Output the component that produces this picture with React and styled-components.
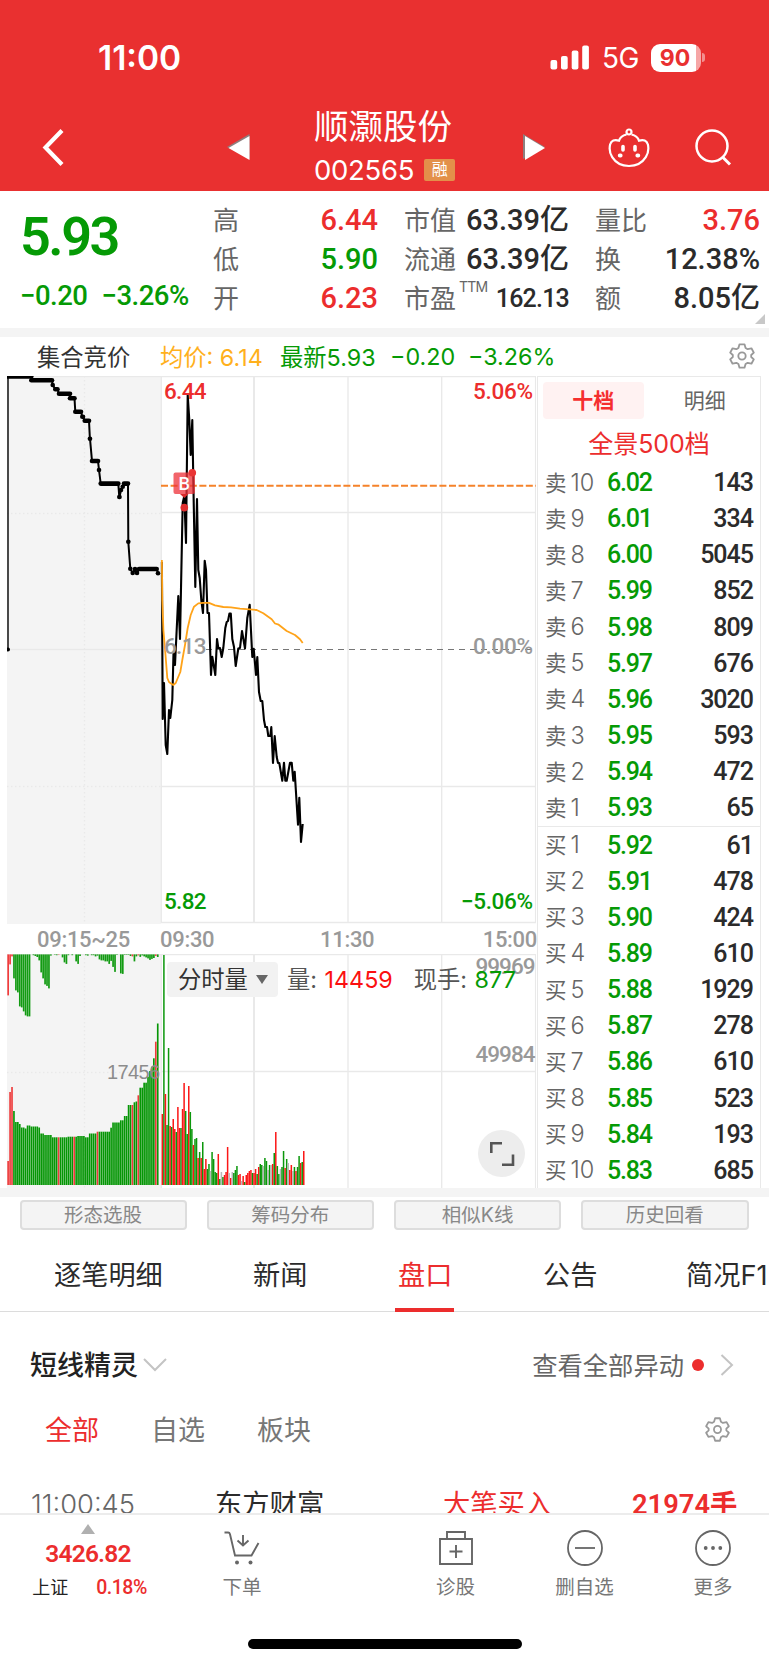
import React from 'react';
import styled, { createGlobalStyle } from 'styled-components'

const red = '#ec2d2d'
const green = '#059a05'
const cjk = '"Noto Sans CJK SC", sans-serif'

const sells = [
  ['10', '6.02', 143], ['9', '6.01', 334], ['8', '6.00', 5045], ['7', '5.99', 852], ['6', '5.98', 809],
  ['5', '5.97', 676], ['4', '5.96', 3020], ['3', '5.95', 593], ['2', '5.94', 472], ['1', '5.93', 65],
]
const buys = [
  ['1', '5.92', 61], ['2', '5.91', 478], ['3', '5.90', 424], ['4', '5.89', 610], ['5', '5.88', 1929],
  ['6', '5.87', 278], ['7', '5.86', 610], ['8', '5.85', 523], ['9', '5.84', 193], ['10', '5.83', 685],
]

const stats = [
  [['高', '6.44', red], ['低', '5.90', green], ['开', '6.23', red]],
  [['市值', '63.39亿'], ['流通', '63.39亿'], ['市盈', '162.13', null, 'TTM']],
  [['量比', '3.76', red], ['换', '12.38%'], ['额', '8.05亿']],
]

// call auction matches, drawn as a dotted step line
const auctionSteps = [
  [8, 376.5, 31.3], [31.3, 380.3, 52], [52.7, 385, 52.7], [55.3, 389.3, 57.5], [59, 393.8, 70], [70, 398.3, 74.5],
  [75.3, 411.7, 81], [82.3, 416.7, 83], [84.7, 420.7, 89], [89.9, 438.7, 90], [92, 461, 98], [99, 470, 99],
  [100.7, 483.6, 118.3], [119.3, 497, 119.5], [121, 490, 121], [122.7, 486.7, 122.7], [124, 483.6, 128], [128.3, 541.7, 128.3],
  [130.3, 568.7, 130.3], [132.7, 573, 132.7], [135, 569, 135], [137, 573, 137], [139, 569, 156.7], [158, 573.3, 158],
]

const price = '161.9,562 162.7,719 164,683 165.7,745 167.3,754 169,710 170.3,718 172.3,700 173.5,653 175,665 178.3,596 180,639 182.7,503 184.3,496 186,543 187.7,395 189.3,420 190.7,455 192.3,420 193.3,480 195.3,587 197,499 198.3,570 199.7,578 201.3,600 203,613 204.7,560.7 206,570 207.5,613 209,613 211,675 212.3,656.7 215.3,675 217,639 218.3,648 220,648 221.7,657 223.3,648 225.3,628 226.7,622 228,621 229.4,613.6 230.8,613.6 232.3,639 234,647 235.7,666 238.3,648.5 240,648 242,631 245,648.5 247.3,618 249.7,604.7 252.3,657 253.7,648.7 256,675 257.3,657 259,692 260.7,701 262.3,701 264,720 265.3,727 267,727 268.3,736 270.3,736 271.3,727 273,763 274.7,736 276.7,757 278,763 279.3,763 282.3,780.7 284,762.7 285.3,780.7 286.7,780.7 290,762.7 291.7,762.7 293.3,780.7 294.7,771.7 298,824.7 299.3,797.7 301,842 302.7,824'

const average = '161.9,560 162.3,600 163.4,630 165.5,655 167.3,678 169,682 171,683.5 173.3,685 175.7,683 180.3,672 182.3,660 185,645 187.7,628 190.7,615 194,606.7 198.3,603.4 203,602.8 209,602.8 215,605.3 223.3,607 231,607.3 240,608.7 256.7,610 263.3,613.3 271.7,619.3 275,623.5 278.7,624.7 286.7,631 295,635 300,639.3 302.7,643'

const auctionVolume = [
  [7.6, 24], [9.5, 93], [11.5, 98], [13.4, 74], [15.4, 63], [18.3, 61], [20.7, 57.5], [25, 56.5], [27.3, 59.5],
  [31, 58.5], [39, 57.5], [40.7, 51.5], [45, 50], [52, 47.7], [66.7, 48.3], [77.3, 49], [85, 47.7], [88.7, 51.5],
  [97, 53.3], [110, 57.3], [112, 62.5], [120, 64.7], [124, 69], [128, 80], [132.7, 82.7], [135, 83.5], [137, 89.7],
  [140, 97.3], [144, 102.3], [146.7, 108.3], [148.5, 114], [150.7, 118.3], [152.7, 126.7], [154.6, 143.3], [157, 161.5],
]
const auctionReds = [0, 1, 2, 26, 34, 46, 64, 67, 76]

const unmatched = [
  41, 10, 2, 24, 36, 38, 52, 53, 57, 61, 62, 62, 0, 0.8, 1.6, 2.6, 6, 18, 24, 30, 31.5, 34, 1.2, 0, 0.4, 0.8, 0.4, 0,
  3, 8, 9.5, 0.8, 0, 0.8, 0, 7, 9.5, 1.6, 0, 0, 0.8, 1.2, 0, 0.8, 0.8, 2, 1.2, 5, 6, 6, 7, 7, 9.5, 6.5, 12.5, 17.5, 0.5,
  0, 19, 19.5, 0.5, 0.5, 0.5, 1.6, 2, 7, 2, 1, 2.5, 1, 2, 3, 4, 5.5, 4.5, 3.6, 1.5, 2.6,
]

// minute volume: bar height and colour key
const minuteVolume = '71r 230g 91r 60g 137g 59r 58g 66r 56r 53g 78r 57r 57g 76r 102r 74g 51g 99r 73g 56g 40r 46g 47g 27r 33g 27r 43g 16r 26r 16g 21g 14x 33g 26g 13g 12g 31r 6g 13x 8g 10r 13r 38r 12x 7r 13x 12g 15g 19g 10r 11r 4x 9r 3g 10r 12r 14r 15r 12g 12r 16r 11g 18r 21g 20g 19x 27g 24g 15x 20g 20x 21r 32g 53r 19g 11g 16x 18g 34g 17r 26g 22x 15r 20r 14x 18g 14r 18g 29g 22r 23g 34r'
  .split(' ').map((v) => [parseFloat(v), v.slice(-1)])
const volumeColors = { r: '#fb1616', g: '#0b970b', x: '#b8b8b8' }

const auctionHeight = (x) => {
  let h = auctionVolume[0][1]
  auctionVolume.forEach(([px, ph]) => {
    if (x >= px - 0.9) h = ph
  })
  return h
}

const Gear = ({ size, color = '#999' }) => (
  <svg width={size} height={size} viewBox="0 0 24 24" fill="none" stroke={color} strokeWidth="1.7" strokeLinejoin="round">
    <path d="M9.7 1.2h4.6l1 3.4 1.9 1.1 3.5-.8 2.2 4-2.4 2.2v1.8l2.4 2.2-2.2 4-3.5-.8-1.9 1.1-1 3.4H9.7l-1-3.4-1.9-1.1-3.5.8-2.2-4 2.4-2.2v-1.8L1.1 8.9l2.2-4 3.5.8 1.9-1.1z" />
    <circle cx="12" cy="12" r="3.4" />
  </svg>
)

const PriceChart = () => (
  <Chart width="529" height="548" viewBox="7 376 529 548">
    <rect x="7" y="376" width="154" height="548" fill="#f4f4f4" />
    <g stroke="#e9e9e9" strokeWidth="1.3">
      <path d="M7 376.5H536M161 512.5H536M161 786.5H536M161 922.5H536M7 649.5H161M161.3 376V923M348 376V923M441.7 376V923M535.6 376V923" fill="none" />
      <path d="M254 376V923" strokeWidth="2" />
      <path d="M84.5 376V923M7 513.5H161M7 786.5H161" strokeDasharray="1.5 2.5" />
    </g>
    <path d="M8 376V649" stroke="#000" strokeWidth="1.4" />
    <circle cx="8" cy="649.5" r="2" />
    <polyline
      points={auctionSteps.map(([x, y, end]) => `${x},${y} ${end},${y}`).join(' ')}
      fill="none" stroke="#000" strokeWidth="2"
    />
    {auctionSteps.map(([x, y, end]) => (
      <path key={`${x}-${y}`} d={`M${x} ${y}H${end + 0.01}`} stroke="#000" strokeWidth="4.6" strokeLinecap="round" />
    ))}
    <path d="M206 649.5H536" stroke="#777" strokeWidth="1.2" strokeDasharray="6 5" />
    <path d="M161 485.8H536" stroke="#f5822a" strokeWidth="1.9" strokeDasharray="7 2.6" />
    <polyline points={price} fill="none" stroke="#000" strokeWidth="2.1" strokeLinejoin="round" />
    <polyline points={average} fill="none" stroke="#ffa319" strokeWidth="1.8" strokeLinejoin="round" />
    <circle cx="184.3" cy="507.6" r="3.8" fill="#e02f2f" />
    <path d="M180 494h8.5l-4.2 4z" fill="#d92a2a" />
    <rect x="173.5" y="472.5" width="21.5" height="21.5" rx="2" fill="#ee3038" opacity="0.75" />
    <circle cx="192.3" cy="472.8" r="3.8" fill="#ea3434" />
    <AxisText x="184.3" y="490" $color="#fff" $size={18} textAnchor="middle">B</AxisText>
    <AxisText x="164" y="398.5" $color={red} textLength="42.5">6.44</AxisText>
    <AxisText x="164" y="653.5" $color="#999" textLength="42.5">6.13</AxisText>
    <AxisText x="164" y="908.5" $color={green} textLength="42.5">5.82</AxisText>
    <AxisText x="473" y="398.5" $color={red} textLength="60">5.06%</AxisText>
    <AxisText x="473" y="653.5" $color="#999" textLength="60">0.00%</AxisText>
    <AxisText x="461" y="908.5" $color={green} textLength="72">−5.06%</AxisText>
  </Chart>
)

const VolumeChart = () => (
  <Chart width="529" height="234" viewBox="7 954 529 234">
    <rect x="7" y="954" width="154" height="234" fill="#f4f4f4" />
    <g stroke="#e9e9e9" strokeWidth="1.3">
      <path d="M7 954.6H536M161 1071.5H536M161.3 954V1188M348 954V1188M441.7 954V1188M535.6 954V1188" />
      <path d="M254 954V1188" strokeWidth="2" />
      <path d="M84.5 954V1188M7 1072.5H161" strokeDasharray="1.5 2.5" />
    </g>
    {unmatched.map((h, i) => (
      <rect
        key={i} x={7.3 + i * 1.943} y="954.4" width="1.7" height={h}
        fill={[0, 1, 2, 26, 64, 67, 76].includes(i) ? '#f03c3c' : '#129b12'}
      />
    ))}
    {unmatched.map((_, i) => {
      const x = 7.3 + i * 1.943
      const h = auctionHeight(x)
      return (
        <rect key={i} x={x} y={1185 - h} width="1.65" height={h} fill={auctionReds.includes(i) ? '#ee3b3b' : '#059605'} />
      )
    })}
    {minuteVolume.map(([h, c], i) => (
      <rect key={i} x={161.6 + i * 1.554} y={1185 - h} width="1.5" height={h} fill={volumeColors[c]} />
    ))}
    <AxisText x="475.5" y="974" $color="#999" textLength="60">99969</AxisText>
    <AxisText x="475.5" y="1062" $color="#999" textLength="60">49984</AxisText>
    <AuctionText x="107" y="1079" textLength="53">17456</AuctionText>
  </Chart>
)

const OrderRow = ({ side, row }) => (
  <Order>
    <OrderLabel>{side}<span>{row[0]}</span></OrderLabel>
    <OrderPrice>{row[1]}</OrderPrice>
    <OrderAmount>{row[2]}</OrderAmount>
  </Order>
)

const App = () => {
  return (
    <Page>
      <GlobalStyle />
      <Header>
        <StatusBar>
          <Clock>11:00</Clock>
          <svg width="40" height="25" viewBox="0 0 40 25" fill="#fff">
            <rect x="0.5" y="15" width="6.7" height="9.5" rx="2" />
            <rect x="11" y="11" width="6.7" height="13.5" rx="2" />
            <rect x="21.7" y="5.5" width="6.7" height="19" rx="2" />
            <rect x="32.2" y="0.5" width="6.7" height="24" rx="2" />
          </svg>
          <Network>5G</Network>
          <Battery>90</Battery>
          <BatteryCap />
        </StatusBar>
        <TitleBar>
          <svg width="22" height="37" viewBox="0 0 22 37" fill="none" stroke="#fff" strokeWidth="4.2">
            <path d="M20 1.5L3.5 18.5l16.5 17" />
          </svg>
          <ArrowLeft width="24" height="27" viewBox="0 0 24 27">
            <path d="M0 13L22.5 0v25z" fill="#8e7f7f" />
            <path d="M1.5 14L22.5 2v24z" fill="#fff" />
          </ArrowLeft>
          <StockTitle>
            <StockName>顺灏股份</StockName>
            <StockCode>002565<Badge>融</Badge></StockCode>
          </StockTitle>
          <ArrowRight width="24" height="27" viewBox="0 0 24 27">
            <path d="M0 0L22 13 0 25z" fill="#8e7f7f" />
            <path d="M2 2L22 14 2 26z" fill="#fff" />
          </ArrowRight>
          <Robot width="42" height="40" viewBox="0 0 42 40" fill="none" stroke="#fff" strokeWidth="2.2">
            <circle cx="21" cy="4" r="2.5" />
            <path d="M18.5 6.5C14.5 7.3 12 9.5 11 12.7 6.5 11.3 3.3 12.5 2.1 16.5 1.3 20 1.6 25 4.2 29.2 7.5 34.5 13.5 38 21 38s13.5-3.5 16.8-8.8c2.6-4.2 2.9-9.2 2.1-12.7-1.2-4-4.4-5.2-8.9-3.8C30 9.5 27.5 7.3 23.5 6.5" />
            <path d="M15 18.5v3.5M27 18.5v3.5" strokeWidth="3.6" strokeLinecap="round" />
            <path d="M11.8 27.5h.8M29.4 27.5h.8" strokeWidth="4" strokeLinecap="round" />
          </Robot>
          <svg width="37" height="38" viewBox="0 0 37 38" fill="none" stroke="#fff" strokeWidth="2.5">
            <circle cx="17" cy="17" r="15.5" />
            <path d="M27.5 28l7.5 7.5" strokeWidth="3" />
          </svg>
        </TitleBar>
      </Header>

      <Quote>
        <QuoteMain>
          <LastPrice>5.93</LastPrice>
          <Change><span>−0.20</span><span>−3.26%</span></Change>
        </QuoteMain>
        {stats.map((column) => (
          <StatColumn key={column[0][0]}>
            {column.map(([label, value, color, note]) => (
              <Stat key={label}>
                <StatLabel>{label}{note && <sup>{note}</sup>}</StatLabel>
                <StatValue $color={color} $small={Boolean(note)}>{value}</StatValue>
              </Stat>
            ))}
          </StatColumn>
        ))}
        <Corner />
      </Quote>

      <Legend>
        <LegendItem $color="#333" $width={123}>集合竞价</LegendItem>
        <LegendItem $color="#ffb01c" $width={120}>均价: 6.14</LegendItem>
        <LegendItem $color={green} $width={110}>最新5.93</LegendItem>
        <LegendItem $color={green} $width={78}>−0.20</LegendItem>
        <LegendItem $color={green}>−3.26%</LegendItem>
        <Gear size={26} />
      </Legend>

      <Market>
        <Charts>
          <PriceChart />
          <TimeAxis>
            <span>09:15~25</span>
            <span>09:30</span>
            <span>11:30</span>
            <span>15:00</span>
          </TimeAxis>
          <VolumeArea>
            <VolumeChart />
            <VolumeLegend>
              <Picker>分时量<i /></Picker>
              <VolumeItem $left={9}>量: <b>14459</b></VolumeItem>
              <VolumeItem $left={21} $down>现手: <b>877</b></VolumeItem>
            </VolumeLegend>
            <Expand>
              <svg width="26" height="26" viewBox="0 0 26 26" fill="none" stroke="#555" strokeWidth="2.6">
                <path d="M2.3 12V2.3H13M24 13.5V23.8H13" />
              </svg>
            </Expand>
          </VolumeArea>
        </Charts>
        <Book>
          <BookTabs>
            <BookTab $active>十档</BookTab>
            <BookTab>明细</BookTab>
          </BookTabs>
          <Panorama>全景500档</Panorama>
          <Orders>{sells.map((row) => <OrderRow key={row[0]} side="卖" row={row} />)}</Orders>
          <Orders $line>{buys.map((row) => <OrderRow key={row[0]} side="买" row={row} />)}</Orders>
        </Book>
      </Market>

      <Tools>
        <Tool>形态选股</Tool>
        <Tool>筹码分布</Tool>
        <Tool>相似K线</Tool>
        <Tool>历史回看</Tool>
      </Tools>

      <Tabs>
        <Tab $width={199}>逐笔明细</Tab>
        <Tab $width={145}>新闻</Tab>
        <Tab $width={145} $active>盘口</Tab>
        <Tab $width={143}>公告</Tab>
        <Tab $width={85}>简况F1</Tab>
      </Tabs>

      <Section>
        <SectionHead>
          <SectionTitle>短线精灵</SectionTitle>
          <svg width="24" height="14" viewBox="0 0 24 14" fill="none" stroke="#c4c4c4" strokeWidth="2">
            <path d="M1 1l11 11L23 1" />
          </svg>
          <ViewAll>查看全部异动</ViewAll>
          <Dot />
          <svg width="14" height="22" viewBox="0 0 14 22" fill="none" stroke="#c4c4c4" strokeWidth="2">
            <path d="M1.5 1L12 11 1.5 21" />
          </svg>
        </SectionHead>
        <Filters>
          <Filter $active>全部</Filter>
          <Filter>自选</Filter>
          <Filter>板块</Filter>
          <Gear size={25} />
        </Filters>
        <Event>
          <EventTime>11:00:45</EventTime>
          <EventName>东方财富</EventName>
          <EventKind>大笔买入</EventKind>
          <EventAmount>21974手</EventAmount>
        </Event>
      </Section>

      <BottomBar>
        <Index>
          <IndexArrow />
          <IndexValue>3426.82</IndexValue>
          <IndexChange>上证<b>0.18%</b></IndexChange>
        </Index>
        <Action $width={132}>
          <svg width="38" height="36" viewBox="0 0 38 36" fill="none" stroke="#666" strokeWidth="1.9">
            <path d="M1.5 2.5h3.6q1.5 0 1.9 1.7l5 21.3h16.5L35.5 13M20 5v10M14.5 10.5L20 15.5l5.5-5" />
            <circle cx="14" cy="32.5" r="2" fill="#666" stroke="none" />
            <circle cx="27.5" cy="32.5" r="2" fill="#666" stroke="none" />
          </svg>
          下单
        </Action>
        <Spacer />
        <Action $width={129}>
          <svg width="36" height="36" viewBox="0 0 36 36" fill="none" stroke="#666" strokeWidth="1.9">
            <path d="M2 9h32v25H2zM9 9V2h18v7M18 15v13M11.5 21.5h13" />
          </svg>
          诊股
        </Action>
        <Action $width={129}>
          <svg width="36" height="36" viewBox="0 0 36 36" fill="none" stroke="#666" strokeWidth="1.8">
            <circle cx="18" cy="18" r="17" />
            <path d="M8 18h20" />
          </svg>
          删自选
        </Action>
        <Action $width={128}>
          <svg width="36" height="36" viewBox="0 0 36 36" fill="none" stroke="#666" strokeWidth="1.8">
            <circle cx="18" cy="18" r="17" />
            <path d="M10.7 18h.01M18 18h.01M25.3 18h.01" strokeWidth="3.8" strokeLinecap="round" />
          </svg>
          更多
        </Action>
      </BottomBar>
      <HomeIndicator />
    </Page>
  );
}

export default App;

const GlobalStyle = createGlobalStyle`
  body {
    margin: 0;
    background: #fff;
  }
  * {
    box-sizing: border-box;
  }
  svg {
    flex-shrink: 0;
  }
`
const Page = styled.div`
  width: 769px;
  height: 1665px;
  overflow: hidden;
  display: flex;
  flex-direction: column;
  background: #fff;
  color: #333;
  font-family: Inter, ${cjk};
  white-space: nowrap;
`
const Header = styled.header`
  height: 191px;
  flex-shrink: 0;
  background: #e93030;
  color: #fff;
`
const StatusBar = styled.div`
  height: 100px;
  padding: 15px 64px 0 98px;
  display: flex;
  align-items: center;
`
const Clock = styled.div`
  flex: 1;
  font-size: 33.5px;
  font-weight: 600;
`
const Network = styled.div`
  margin: 1px 12px 0 12px;
  font-size: 28px;
  letter-spacing: -0.5px;
`
const Battery = styled.div`
  width: 50px;
  height: 28px;
  border-radius: 9px;
  background: linear-gradient(90deg, #fff 90%, #f6a6a6 90%);
  color: #e93030;
  font-size: 23px;
  font-weight: 700;
  line-height: 28px;
  text-align: center;
  padding-right: 2px;
`
const BatteryCap = styled.div`
  width: 3px;
  height: 9px;
  margin-left: 1px;
  border-radius: 0 4px 4px 0;
  background: #f29090;
`
const TitleBar = styled.div`
  height: 91px;
  padding: 3px 37px 0 42px;
  display: flex;
  align-items: center;
  & > svg {
    margin-top: 1px;
  }
`
const ArrowLeft = styled.svg`
  margin-left: 163px;
`
const ArrowRight = styled.svg`
  margin-left: 64px;
`
const Robot = styled.svg`
  margin-left: 61px;
  margin-right: 45px;
`
const StockTitle = styled.div`
  width: 145px;
  margin-left: 63px;
`
const StockName = styled.div`
  font-size: 34.5px;
  line-height: 46px;
  margin-top: -4px;
`
const StockCode = styled.div`
  display: flex;
  align-items: center;
  font-size: 27.5px;
  line-height: 34px;
  margin-top: 3px;
  letter-spacing: -0.3px;
`
const Badge = styled.span`
  width: 31px;
  height: 22px;
  margin-left: 10px;
  border-radius: 2px;
  background: #e3904a;
  font-size: 16px;
  line-height: 21px;
  text-align: center;
`
const Quote = styled.section`
  position: relative;
  height: 146px;
  flex-shrink: 0;
  padding: 10px 9px 0 20px;
  border-bottom: 9px solid #f4f4f4;
  display: flex;
  gap: 26px;
`
const QuoteMain = styled.div`
  width: 167px;
  color: ${green};
  font-family: Roboto, ${cjk};
  font-weight: 600;
`
const LastPrice = styled.div`
  font-size: 54px;
  line-height: 72px;
  letter-spacing: -2.5px;
`
const Change = styled.div`
  display: flex;
  gap: 14px;
  font-size: 27.5px;
  line-height: 32px;
  margin-top: 7px;
  font-weight: 500;
  letter-spacing: -0.5px;
`
const StatColumn = styled.div`
  width: 165px;
`
const Stat = styled.div`
  height: 39px;
  display: flex;
  align-items: center;
  justify-content: space-between;
`
const StatLabel = styled.div`
  font-size: 26px;
  line-height: 39px;
  color: #666;

  sup {
    font-size: 14px;
    line-height: 10px;
    margin-left: 3px;
    vertical-align: 16px;
    letter-spacing: -0.8px;
  }
`
const StatValue = styled.div`
  color: ${({ $color }) => $color || '#2b2b2b'};
  font-family: Roboto, ${cjk};
  font-weight: 500;
  font-size: ${({ $small }) => ($small ? '25px' : '29px')};
  letter-spacing: ${({ $small }) => ($small ? '-0.8px' : '0')};
  line-height: 39px;
`
const Corner = styled.div`
  position: absolute;
  right: 4px;
  bottom: 4px;
  border-left: 10px solid transparent;
  border-bottom: 10px solid #c8c8c8;
`
const Legend = styled.div`
  height: 39px;
  flex-shrink: 0;
  padding: 0 14px 1px 37px;
  display: flex;
  align-items: center;

  svg {
    margin-left: auto;
    margin-bottom: 1px;
  }
`
const LegendItem = styled.div`
  width: ${({ $width }) => ($width ? `${$width}px` : 'auto')};
  color: ${({ $color }) => $color};
  font-size: 23.3px;
`
const Market = styled.section`
  height: 821px;
  flex-shrink: 0;
  padding: 0 8px 0 7px;
  border-bottom: 9px solid #f4f4f4;
  display: flex;
`
const Charts = styled.div`
  width: 530px;
`
const Chart = styled.svg`
  display: block;
`
const AxisText = styled.text`
  fill: ${({ $color }) => $color};
  font-family: Roboto, sans-serif;
  font-size: ${({ $size }) => $size || 22.5}px;
  font-weight: 500;
`
const AuctionText = styled.text`
  fill: #8c8c8c;
  font-family: "Liberation Sans", sans-serif;
  font-size: 20px;
`
const TimeAxis = styled.div`
  height: 30px;
  display: grid;
  grid-template-columns: 123px 160px 1fr auto;
  padding: 0 0 0 30px;
  align-items: center;
  color: #999;
  font-family: Roboto, sans-serif;
  font-size: 22px;
  font-weight: 500;
  line-height: 32px;
  letter-spacing: -0.3px;
`
const VolumeArea = styled.div`
  position: relative;
`
const VolumeLegend = styled.div`
  position: absolute;
  left: 160px;
  top: 8px;
  height: 35px;
  display: flex;
  align-items: center;
  font-size: 23.3px;
  line-height: 30px;
`
const Picker = styled.div`
  width: 111px;
  height: 35px;
  padding-left: 11px;
  border-radius: 4px;
  background: #f2f2f2;
  display: flex;
  align-items: center;

  i {
    margin-left: 8px;
    border: 6px solid transparent;
    border-top: 9px solid #666;
    border-bottom: 0;
  }
`
const VolumeItem = styled.div`
  margin-left: ${({ $left }) => $left}px;
  color: #555;

  b {
    font-weight: 400;
    margin-left: 1px;
    color: ${({ $down }) => ($down ? green : '#fb1010')};
  }
`
const Expand = styled.div`
  position: absolute;
  left: 471px;
  top: 176px;
  width: 47px;
  height: 47px;
  border-radius: 50%;
  background: #ededed;
  display: flex;
  align-items: center;
  justify-content: center;
`
const Book = styled.div`
  width: 224px;
  border: 1.5px solid #e9e9e9;
  border-bottom: 0;
`
const BookTabs = styled.div`
  display: flex;
  padding: 5px 5px 0;
  gap: 11px;
`
const BookTab = styled.div`
  width: 101px;
  height: 37px;
  border-radius: 4px;
  background: ${({ $active }) => ($active ? '#fff2f2' : 'transparent')};
  color: ${({ $active }) => ($active ? '#f52f2f' : '#666')};
  font-size: 21px;
  font-weight: ${({ $active }) => ($active ? 700 : 400)};
  line-height: 37px;
  text-align: center;
`
const Panorama = styled.div`
  height: 45px;
  color: ${red};
  font-size: 25px;
  line-height: 51px;
  text-align: center;
`
const Orders = styled.div`
  height: 361.5px;
  border-top: ${({ $line }) => ($line ? '1.5px solid #e9e9e9' : '0')};
`
const Order = styled.div`
  height: 36.15px;
  padding: 1px 8px 0 7px;
  display: flex;
  align-items: center;
`
const OrderLabel = styled.div`
  width: 62px;
  color: #666;
  font-size: 21.5px;
  line-height: 34px;

  span {
    margin-left: 4px;
    font-size: 23.5px;
    font-weight: 300;
  }
`
const OrderPrice = styled.div`
  flex: 1;
  color: ${green};
  font-family: Roboto, sans-serif;
  font-size: 25px;
  font-weight: 500;
  letter-spacing: -1.2px;
`
const OrderAmount = styled.div`
  margin-right: -1px;
  color: #2b2b2b;
  font-family: Roboto, sans-serif;
  font-size: 25px;
  font-weight: 500;
  letter-spacing: -1px;
`
const Tools = styled.div`
  height: 33px;
  flex-shrink: 0;
  padding: 3px 20.5px 0 19.5px;
  display: grid;
  grid-template-columns: repeat(4, 1fr);
  gap: 20px;
`
const Tool = styled.div`
  height: 30px;
  border: 2px solid #ddd;
  border-radius: 4px;
  background: #f4f4f4;
  color: #888;
  font-size: 19.5px;
  line-height: 26px;
  text-align: center;
`
const Tabs = styled.nav`
  height: 82px;
  flex-shrink: 0;
  padding-left: 54px;
  border-bottom: 1px solid #dcdcdc;
  display: flex;
`
const Tab = styled.div`
  position: relative;
  flex: none;
  width: ${({ $width }) => $width}px;
  color: ${({ $active }) => ($active ? red : '#2b2b2b')};
  font-size: 27.2px;
  line-height: 91px;

  &::after {
    content: '';
    display: ${({ $active }) => ($active ? 'block' : 'none')};
    position: absolute;
    left: -3px;
    bottom: -1px;
    width: 59px;
    height: 4px;
    background: ${red};
  }
`
const Section = styled.section`
  height: 201px;
  flex-shrink: 0;
  overflow: hidden;
`
const SectionHead = styled.div`
  height: 104px;
  padding: 2px 35px 0 30px;
  display: flex;
  align-items: center;
`
const SectionTitle = styled.div`
  margin: -3px 5px 0 0;
  color: #222;
  font-size: 27px;
  font-weight: 500;
`
const ViewAll = styled.div`
  margin: -3px 0 0 auto;
  color: #666;
  font-size: 25.3px;
`
const Dot = styled.div`
  width: 12px;
  height: 12px;
  margin: 0 16px 0 8px;
  border-radius: 50%;
  background: ${red};
`
const Filters = styled.div`
  height: 30px;
  padding: 0 39px 0 45px;
  display: flex;
  align-items: center;

  svg {
    margin: -4px 0 0 auto;
  }
`
const Filter = styled.div`
  margin-top: -6px;
  margin-right: 52px;
  color: ${({ $active }) => ($active ? red : '#777')};
  font-size: 27px;
`
const Event = styled.div`
  height: 60px;
  margin-top: 29px;
  padding-left: 31px;
  display: grid;
  grid-template-columns: 184px 228px 189px 1fr;
  font-size: 27.3px;
  line-height: 60px;
`
const EventTime = styled.div`
  color: #666;
  font-weight: 300;
`
const EventName = styled.div`
  color: #2b2b2b;
`
const EventKind = styled.div`
  color: ${red};
`
const EventAmount = styled.div`
  color: ${red};
  font-family: Roboto, ${cjk};
  font-weight: 600;
`
const BottomBar = styled.footer`
  height: 96px;
  flex-shrink: 0;
  border-top: 2px solid #ececec;
  display: flex;
  background: #fff;
`
const Index = styled.div`
  flex: none;
  width: 176px;
  display: flex;
  flex-direction: column;
  align-items: center;
`
const IndexArrow = styled.div`
  margin-top: 9px;
  border: 7px solid transparent;
  border-bottom: 10px solid #b0b0b0;
  border-top: 0;
`
const IndexValue = styled.div`
  color: ${red};
  font-family: Roboto, sans-serif;
  font-size: 24.5px;
  font-weight: 600;
  line-height: 39px;
  letter-spacing: -0.8px;
`
const IndexChange = styled.div`
  padding-left: 3px;
  color: #222;
  font-size: 18px;
  line-height: 30px;

  b {
    margin-left: 28px;
    color: ${red};
    font-family: Roboto, sans-serif;
    font-size: 19.5px;
    font-weight: 500;
    letter-spacing: -0.5px;
  }
`
const Action = styled.div`
  flex: none;
  width: ${({ $width }) => $width}px;
  padding-top: 15px;
  display: flex;
  flex-direction: column;
  align-items: center;
  color: #777;
  font-size: 19.5px;
  line-height: 42px;
`
const Spacer = styled.div`
  flex: none;
  width: 83px;
`
const HomeIndicator = styled.div`
  width: 274px;
  height: 10px;
  margin: 30px auto 0;
  flex-shrink: 0;
  border-radius: 5px;
  background: #000;
`
